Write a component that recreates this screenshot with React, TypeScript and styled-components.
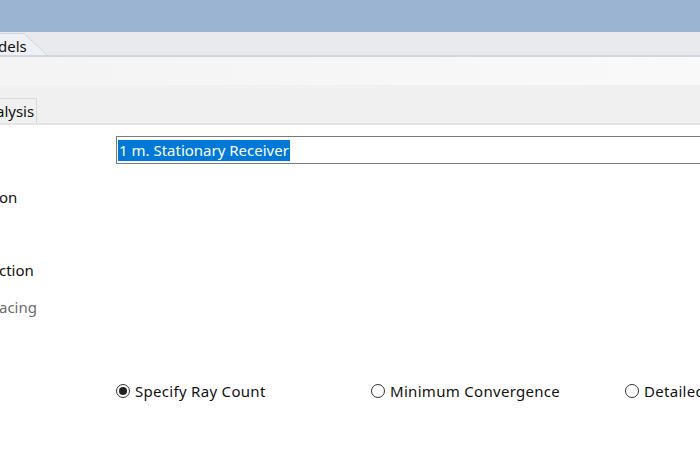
import styled, { createGlobalStyle } from 'styled-components'

const GlobalStyle = createGlobalStyle`
  html, body {
    margin: 0;
    padding: 0;
    width: 700px;
    height: 450px;
    overflow: hidden;
    background: #ffffff;
    font-family: 'Noto Sans', 'Open Sans', sans-serif;
  }
`

const Window = styled.div`
  width: 700px;
  height: 450px;
  display: flex;
  flex-direction: column;
  overflow: hidden;
`

const TitleBar = styled.div`
  height: 32px;
  flex: none;
  background: #9ab4d2;
`

const TabStrip = styled.div`
  height: 23px;
  flex: none;
  display: flex;
  align-items: flex-end;
  background: #e9eaee;
  border-bottom: 2px solid #d3d5df;
`

const DocTab = styled.div`
  position: relative;
  height: 22px;
  width: 50px;
  display: flex;
  align-items: center;
  font-size: 15px;
  color: #111;
  svg {
    position: absolute;
    left: 0;
    top: 0;
  }
  span {
    position: relative;
    margin-left: -2px;
    top: 2px;
  }
`

const Ribbon = styled.div`
  height: 28px;
  flex: none;
  background: linear-gradient(to right, #f4f4f4, #f6f6f6 40%, #f9f9f9);
`

const SubTabBar = styled.div`
  height: 38px;
  flex: none;
  display: flex;
  align-items: flex-end;
  background: #f0f0f0;
  border-bottom: 2px solid #e4e4e4;
`

const SubTab = styled.div`
  height: 24px;
  display: flex;
  align-items: center;
  margin-left: -9px;
  padding: 0 2px 0 4px;
  border: 1px solid #d9d9d9;
  border-bottom: none;
  background: #f0f0f0;
  font-size: 15px;
  color: #111;
`

const Content = styled.div`
  flex: 1;
  background: #ffffff;
  display: flex;
  flex-direction: column;
`

const Row = styled.div<{ $top: number; $height: number }>`
  margin-top: ${p => p.$top}px;
  height: ${p => p.$height}px;
  display: grid;
  grid-template-columns: 116px 1fr;
  align-items: center;
`

const Label = styled.div<{ $muted?: boolean }>`
  font-size: 15px;
  color: ${p => (p.$muted ? '#6b6b6b' : '#111')};
  margin-left: -1px;
  white-space: nowrap;
  overflow: hidden;
`

const TextBox = styled.div`
  height: 28px;
  box-sizing: border-box;
  width: 600px;
  border: 1px solid #7a7a7a;
  display: flex;
  align-items: center;
  padding-left: 1px;
`

const Selected = styled.span`
  background: #0078d7;
  color: #ffffff;
  font-size: 15px;
  line-height: 21px;
  padding: 0 1px;
`

const RadioGroup = styled.div`
  display: grid;
  grid-template-columns: 255px 254px auto;
  white-space: nowrap;
`

const RadioItem = styled.label`
  display: flex;
  align-items: center;
  gap: 5px;
  font-size: 15px;
  letter-spacing: 0.3px;
  color: #111;
`

const RadioDot = styled.span<{ $checked?: boolean }>`
  width: 14px;
  height: 14px;
  box-sizing: border-box;
  border-radius: 50%;
  border: 1px solid #333;
  display: flex;
  align-items: center;
  justify-content: center;
  &::after {
    content: '';
    width: 8px;
    height: 8px;
    border-radius: 50%;
    background: ${p => (p.$checked ? '#222' : 'transparent')};
  }
`

export default function App() {
  return (
    <Window>
      <GlobalStyle />
      <TitleBar />
      <TabStrip>
        <DocTab>
          <svg width="50" height="22" viewBox="0 0 50 22">
            <path d="M0 0.5 H24 L47 22 H0 Z" fill="#eef0f3" />
            <path d="M0 0.5 H24 L47 22" fill="none" stroke="#d2d6df" strokeWidth="1" />
          </svg>
          <span>dels</span>
        </DocTab>
      </TabStrip>
      <Ribbon />
      <SubTabBar>
        <SubTab>alysis</SubTab>
      </SubTabBar>
      <Content>
        <Row $top={11} $height={28}>
          <span />
          <TextBox>
            <Selected>1 m. Stationary Receiver</Selected>
          </TextBox>
        </Row>
        <Row $top={21} $height={24}>
          <Label>on</Label>
        </Row>
        <Row $top={49} $height={24}>
          <Label>ction</Label>
        </Row>
        <Row $top={13} $height={24}>
          <Label $muted>acing</Label>
        </Row>
        <Row $top={60} $height={24}>
          <span />
          <RadioGroup>
            <RadioItem>
              <RadioDot $checked />
              Specify Ray Count
            </RadioItem>
            <RadioItem>
              <RadioDot />
              Minimum Convergence
            </RadioItem>
            <RadioItem>
              <RadioDot />
              Detailed
            </RadioItem>
          </RadioGroup>
        </Row>
      </Content>
    </Window>
  )
}
